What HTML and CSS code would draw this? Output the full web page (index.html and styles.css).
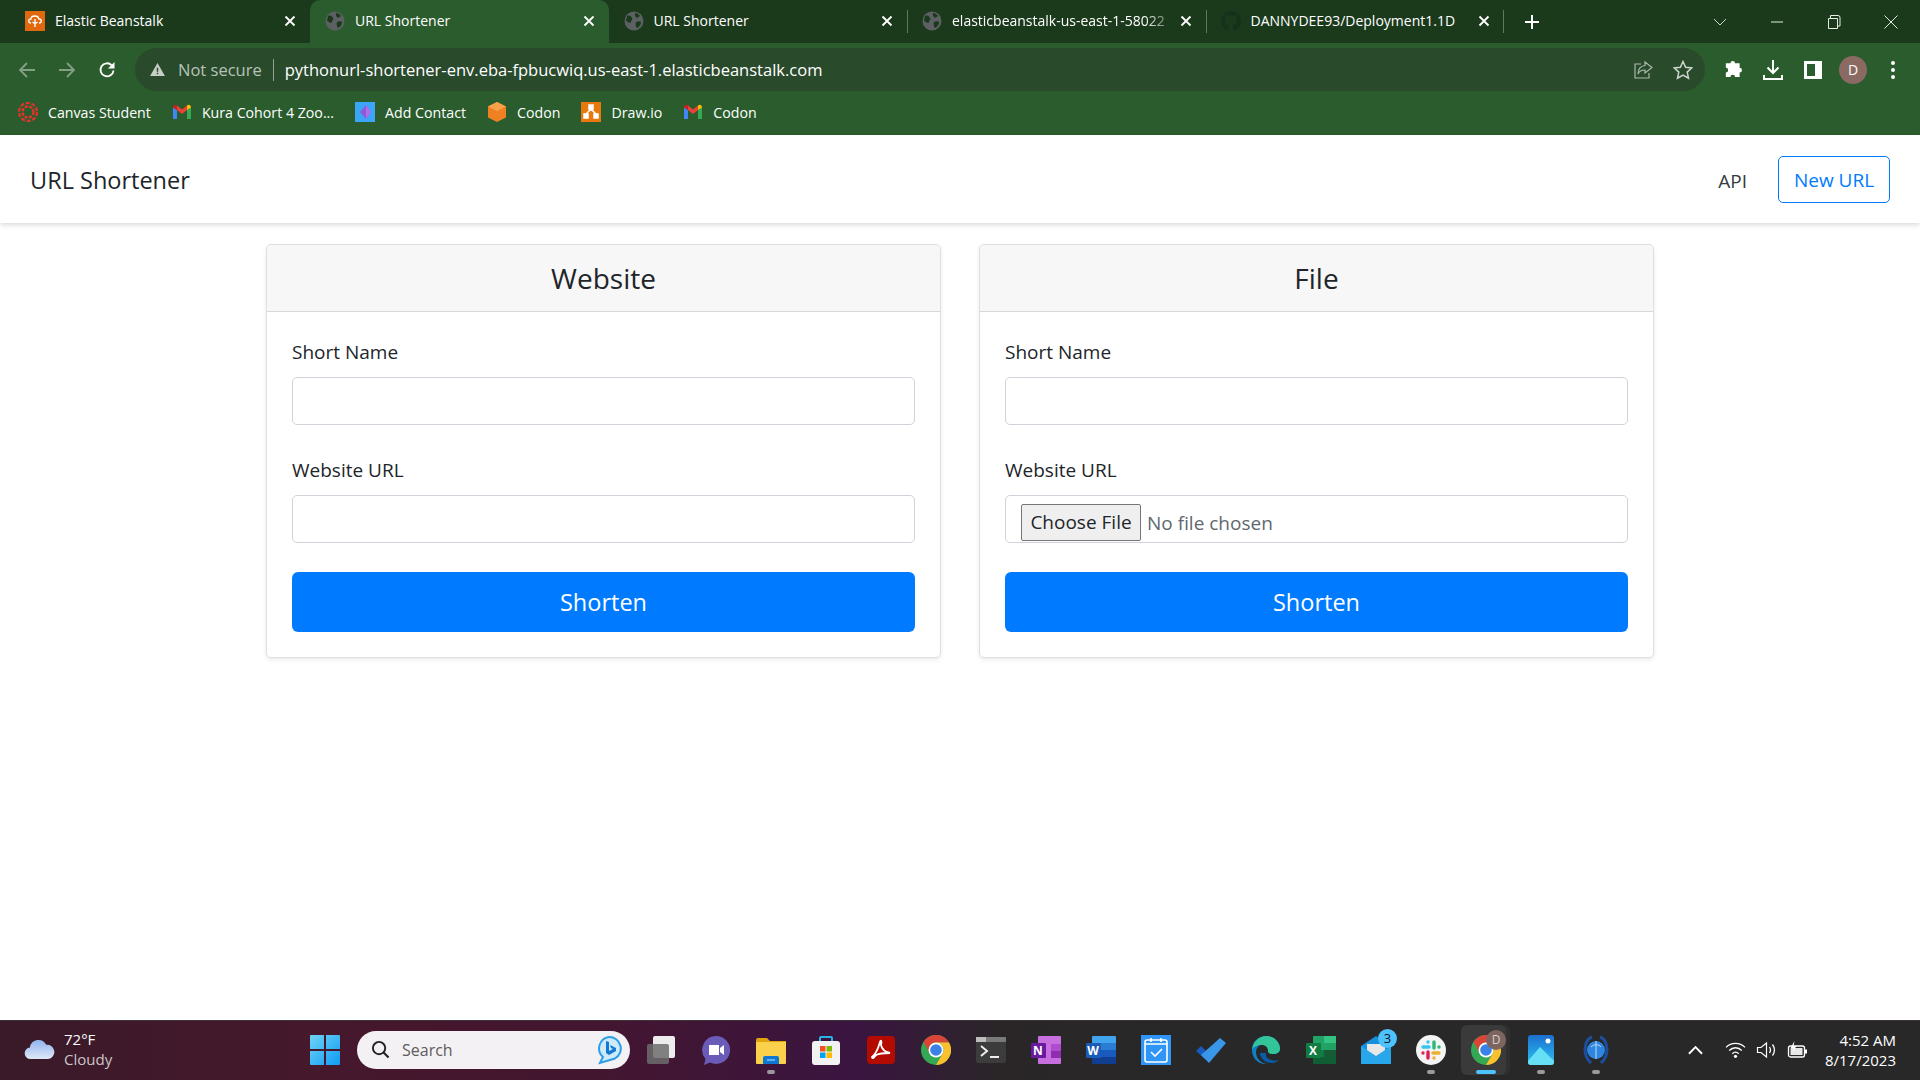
FILE: index.html
```html
<!doctype html>
<html lang="en">
<head>
	<meta charset="UTF-8">
	<title>URL Shortener</title>
	<link rel="stylesheet" href="styles.css">
</head>
<body>
	<svg class="defs" width="0" height="0">
		<symbol id="x" viewBox="0 0 12 12"><path d="M1.5 1.5l9 9M10.5 1.5l-9 9" stroke="#fff" stroke-width="1.8" fill="none"/></symbol>
		<symbol id="globe" viewBox="0 0 20 20"><circle cx="10" cy="10" r="9.5" fill="#5c6063"/><path d="M3 5c3-1 4 0 5 2s-1 2-1 4-3 0-5-1zM11 2c3 0 4 2 5 3l-3 2-2-2zM12 11c2-1 4-1 5 0 0 3-2 5-4 6-1-1-2-4-1-6z" fill="#1b3a1c"/></symbol>
		<symbol id="gmail" viewBox="0 0 20 16"><path d="M1 15V3l4 3v9z" fill="#4285f4"/><path d="M19 15V3l-4 3v9z" fill="#34a853"/><path d="M5 6V1.500l5 4 5-4V6l-5 4z" fill="#ea4335"/><path d="M1 3.500C1 1 3.500 0 5 1.500V6z" fill="#c5221f"/><path d="M19 3.500C19 1 16.500 0 15 1.500V6z" fill="#fbbc04"/></symbol>
		<symbol id="chrome" viewBox="0 0 30 30"><circle cx="15" cy="15" r="15" fill="#34a853"/><path d="M2.500 6.700A15 15 0 0 1 28 7.500H15A7.500 7.500 0 0 0 8.500 11.250L9 18.700z" fill="#db4437"/><path d="M28 7.500A15 15 0 0 1 15 30L21.500 18.750A7.500 7.500 0 0 0 15 7.500z" fill="#fbc02d"/><circle cx="15" cy="15" r="7.500" fill="#fff"/><circle cx="15" cy="15" r="5.800" fill="#3b82e8"/></symbol>
	</svg>

	<div class="tabstrip">
		<div class="tab">
			<svg class="favicon" viewBox="0 0 20 20"><rect width="20" height="20" fill="#e0690f"/><path d="M6 12c-3 0-3-4 0-4 0-4 7-4 8 0 3 0 3 4 0 4M10 8v8M7.500 11l2.500 2 2.500-2" stroke="#fff" stroke-width="1.300" fill="none"/></svg>
			<span class="tab-title">Elastic Beanstalk</span>
			<svg class="tab-close"><use href="#x"/></svg>
		</div>
		<div class="tab active">
			<svg class="favicon"><use href="#globe"/></svg>
			<span class="tab-title">URL Shortener</span>
			<svg class="tab-close"><use href="#x"/></svg>
		</div>
		<div class="tab">
			<svg class="favicon"><use href="#globe"/></svg>
			<span class="tab-title">URL Shortener</span>
			<svg class="tab-close"><use href="#x"/></svg>
		</div>
		<div class="tab divided">
			<svg class="favicon"><use href="#globe"/></svg>
			<span class="tab-title faded">elasticbeanstalk-us-east-1-58022</span>
			<svg class="tab-close"><use href="#x"/></svg>
		</div>
		<div class="tab divided closing">
			<svg class="favicon" viewBox="0 0 20 20"><path d="M10 0a10 10 0 0 0-3 19.500c.500 0 .700-.200.700-.500v-2c-2.800.600-3.400-1.200-3.400-1.200-.500-1.200-1.100-1.500-1.100-1.500-.900-.600.100-.600.100-.600 1 .100 1.500 1 1.500 1 .900 1.500 2.300 1.100 2.900.800 0-.600.300-1.100.600-1.300-2.200-.300-4.600-1.100-4.600-5 0-1.100.400-2 1-2.700 0-.300-.400-1.300.100-2.700 0 0 .800-.300 2.700 1a9 9 0 0 1 5 0c1.900-1.300 2.700-1 2.700-1 .500 1.400.200 2.400.100 2.700.600.700 1 1.600 1 2.700 0 3.900-2.400 4.700-4.600 5 .400.300.700.900.700 1.900V19c0 .300.200.600.700.500A10 10 0 0 0 10 0z" fill="#16301a"/></svg>
			<span class="tab-title">DANNYDEE93/Deployment1.1D</span>
			<svg class="tab-close"><use href="#x"/></svg>
		</div>
		<svg class="new-tab" viewBox="0 0 16 16"><path d="M8 1v14M1 8h14" stroke="#fff" stroke-width="2"/></svg>
		<div class="win-controls">
			<svg viewBox="0 0 14 14"><path d="M1 4l6 6 6-6" stroke="#cfd8cf" fill="none"/></svg>
			<svg viewBox="0 0 14 14"><path d="M1 7h12" stroke="#e6ece6"/></svg>
			<svg viewBox="0 0 14 14"><path d="M1.500 3.500h9v10h-9zM3.500 3.500v-3h7.500a2 2 0 0 1 2 2v8.500h-2.500" stroke="#e6ece6" fill="none"/></svg>
			<svg viewBox="0 0 14 14"><path d="M.5.500l13 13M13.500.500l-13 13" stroke="#e6ece6" fill="none"/></svg>
		</div>
	</div>

	<div class="toolbar">
		<div class="nav-btns">
			<svg viewBox="0 0 18 18"><path d="M17 9H2M9 2L2 9l7 7" stroke="#83a085" stroke-width="1.800" fill="none"/></svg>
			<svg viewBox="0 0 18 18"><path d="M1 9h15M9 2l7 7-7 7" stroke="#83a085" stroke-width="1.800" fill="none"/></svg>
			<svg viewBox="0 0 18 18"><path d="M15.500 9.500a6.500 6.500 0 1 1-1.800-5.200" stroke="#fff" stroke-width="1.900" fill="none"/><path d="M16.500 1v6.500H10z" fill="#fff"/></svg>
		</div>
		<div class="omnibox">
			<svg class="warn" viewBox="0 0 16 14"><path d="M8 0l8 14H0z" fill="#c6cfc6"/><path d="M7.200 5h1.600v4.500H7.200zM7.200 10.500h1.600v1.600H7.200z" fill="#2a4a2c"/></svg>
			<span class="not-secure">Not secure</span>
			<span class="omni-sep"></span>
			<span class="url">pythonurl-shortener-env.eba-fpbucwiq.us-east-1.elasticbeanstalk.com</span>
			<svg class="omni-icon first" viewBox="0 0 20 20"><path d="M8 4H2v14h14v-5" stroke="#a9b7a9" stroke-width="1.200" fill="none"/><path d="M12 2l7 5.500-7 5.500V10c-4 0-6 1.500-7 4 0-5 3-8 7-8.500z" stroke="#a9b7a9" stroke-width="1.200" fill="none"/></svg>
			<svg class="omni-icon" viewBox="0 0 20 20"><path d="M10 1.500l2.600 5.700 6.200.700-4.600 4.200 1.300 6.100L10 15.100l-5.500 3.100 1.300-6.100L1.200 7.900l6.200-.700z" stroke="#cdd6cd" stroke-width="1.500" fill="none"/></svg>
		</div>
		<div class="tool-btns">
			<svg viewBox="0 0 20 20"><path d="M7 3a2.500 2.500 0 0 1 5 0h5v5a2.500 2.500 0 0 1 0 5v5h-5a2.500 2.500 0 0 0-5 0H2v-5a2.500 2.500 0 0 0 0-5V3z" fill="#fff" transform="translate(1 .5) scale(.92)"/></svg>
			<svg viewBox="0 0 20 20"><path d="M10 0v12M4.500 7.500L10 13l5.500-5.500M1 15v4h18v-4" stroke="#fff" stroke-width="2" fill="none"/></svg>
			<svg viewBox="0 0 20 20"><path d="M1 1h18v18H1z" fill="#fff"/><path d="M4 4h8v12H4z" fill="#2a5c2d"/></svg>
			<span class="avatar">D</span>
			<svg viewBox="0 0 20 20"><circle cx="10" cy="3" r="2" fill="#fff"/><circle cx="10" cy="10" r="2" fill="#fff"/><circle cx="10" cy="17" r="2" fill="#fff"/></svg>
		</div>
	</div>

	<div class="bookmarks">
		<div class="bm">
			<svg viewBox="0 0 20 20"><circle cx="10" cy="10" r="5.500" fill="none" stroke="#e2342d" stroke-width="2.500" stroke-dasharray="3 1.400"/><circle cx="10" cy="10" r="9" fill="none" stroke="#e2342d" stroke-width="2.200" stroke-dasharray="4 1.700"/></svg>
			<span>Canvas Student</span>
		</div>
		<div class="bm">
			<svg><use href="#gmail"/></svg>
			<span>Kura Cohort 4 Zoo...</span>
		</div>
		<div class="bm">
			<svg viewBox="0 0 20 20"><rect width="20" height="20" fill="#3aa6f5"/><path d="M11 3l5 7-5 7-6-7z" fill="#8e5bd8"/><path d="M11 3l5 7-5 7z" fill="#b06fe8"/></svg>
			<span>Add Contact</span>
		</div>
		<div class="bm">
			<svg viewBox="0 0 20 20"><path d="M10 0l9 4.500v11L10 20l-9-4.500v-11z" fill="#ef8024"/><path d="M10 0l9 4.500L10 9 1 4.500z" fill="#f7a24b"/></svg>
			<span>Codon</span>
		</div>
		<div class="bm">
			<svg viewBox="0 0 20 20"><rect width="20" height="20" fill="#e8790f"/><path d="M8 3h4v4H8zM3 12h4v4H3zM13 12h4v4h-4zM10 7l-5 5M10 7l5 5" fill="#fff" stroke="#fff" stroke-width="1.500"/></svg>
			<span>Draw.io</span>
		</div>
		<div class="bm">
			<svg><use href="#gmail"/></svg>
			<span>Codon</span>
		</div>
	</div>

	<nav class="navbar">
		<a class="brand">URL Shortener</a>
		<a class="nav-link">API</a>
		<a class="btn-outline">New URL</a>
	</nav>

	<main class="cards">
		<section class="card">
			<h4 class="card-header">Website</h4>
			<form class="card-body">
				<label class="field-label">Short Name</label>
				<input class="form-control" type="text">
				<label class="field-label">Website URL</label>
				<input class="form-control last" type="text">
				<button class="btn-primary" type="button">Shorten</button>
			</form>
		</section>
		<section class="card">
			<h4 class="card-header">File</h4>
			<form class="card-body">
				<label class="field-label">Short Name</label>
				<input class="form-control" type="text">
				<label class="field-label">Website URL</label>
				<input class="form-control last" type="file">
				<button class="btn-primary" type="button">Shorten</button>
			</form>
		</section>
	</main>

	<footer class="taskbar">
		<div class="weather">
			<svg viewBox="0 0 32 22"><defs><linearGradient id="cloud" x1="0" y1="0" x2="0" y2="1"><stop offset="0" stop-color="#8fb4ee"/><stop offset="1" stop-color="#dfe8f8"/></linearGradient></defs><path d="M7 21a6 6 0 0 1-1-12 9 9 0 0 1 17-3 7.500 7.500 0 0 1 2 15z" fill="url(#cloud)"/></svg>
			<div class="weather-text"><span>72°F</span><span class="muted">Cloudy</span></div>
		</div>
		<div class="task-item">
			<svg viewBox="0 0 30 30"><defs><linearGradient id="win" x1="0" y1="0" x2="1" y2="1"><stop offset="0" stop-color="#6fd4f5"/><stop offset="1" stop-color="#0f9bf5"/></linearGradient></defs><path d="M0 1a1 1 0 0 1 1-1h13v14H0zM16 0h13a1 1 0 0 1 1 1v13H16zM0 16h14v14H1a1 1 0 0 1-1-1zM16 16h14v13a1 1 0 0 1-1 1H16z" fill="url(#win)"/></svg>
		</div>
		<div class="search">
			<svg class="search-glass" viewBox="0 0 20 20"><circle cx="8.500" cy="8.500" r="6.500" fill="none" stroke="#222" stroke-width="2"/><path d="M13 13l5.500 5.500" stroke="#222" stroke-width="2.200"/></svg>
			<span class="search-text">Search</span>
			<svg class="bing" viewBox="0 0 26 30"><path d="M13 2a11.500 11.500 0 0 1 6 21.500L4 28l3-6A11.500 11.500 0 0 1 13 2z" fill="#cdeafb" stroke="#2a9ee8" stroke-width="2"/><path d="M10 6l3 1v9l4-2-2-1-1-3 6 3v3l-7 4-3-2z" fill="#1477d4"/></svg>
		</div>
		<div class="task-icons">
			<div class="task-item"><svg viewBox="0 0 30 30"><rect x="7" y="1" width="22" height="22" rx="2" fill="#ececec"/><rect x="1" y="9" width="22" height="20" rx="2" fill="#6d6d6d" opacity=".85"/></svg></div>
			<div class="task-item"><svg viewBox="0 0 30 30"><path d="M15 1a14 14 0 1 1-6 26.600L3 30l1.500-6A14 14 0 0 1 15 1z" fill="#6a5bb8"/><path d="M8 10h10v10H8zM19 13l4-3v10l-4-3z" fill="#fff"/></svg></div>
			<div class="task-item dot"><svg viewBox="0 0 30 30"><path d="M0 5a2 2 0 0 1 2-2h9l3 3h16v5H0z" fill="#e2a40e"/><path d="M0 7h30v21a1 1 0 0 1-1 1H1a1 1 0 0 1-1-1z" fill="#fbd14b"/><path d="M7 29v-6a2 2 0 0 1 2-2h12a2 2 0 0 1 2 2v6z" fill="#0f78d4"/><path d="M11 25h8" stroke="#7ec4f5" stroke-width="1.500"/></svg></div>
			<div class="task-item"><svg viewBox="0 0 30 30"><path d="M9 7V3a1 1 0 0 1 1-1h10a1 1 0 0 1 1 1v4" stroke="#27b5e8" stroke-width="2" fill="none"/><rect x="1" y="6" width="28" height="24" rx="3" fill="#f2f2f2"/><path d="M9 11h5.500v5.500H9z" fill="#f25022"/><path d="M15.500 11H21v5.500h-5.500z" fill="#7fba00"/><path d="M9 17.500h5.500V23H9z" fill="#00a4ef"/><path d="M15.500 17.500H21V23h-5.500z" fill="#ffb900"/></svg></div>
			<div class="task-item"><svg viewBox="0 0 30 30"><rect x="1" y="1" width="28" height="28" rx="4" fill="#b30b00"/><path d="M6 22c3-2 6-8 8-15 1-3 2 0 1 3 1 5 4 7 9 8-5 0-10 0-14 2-2 3-4 4-4 2z" fill="none" stroke="#fff" stroke-width="1.800"/></svg></div>
			<div class="task-item"><svg viewBox="0 0 30 30"><use href="#chrome"/></svg></div>
			<div class="task-item"><svg viewBox="0 0 30 30"><rect y="2" width="30" height="26" rx="2" fill="#3c3c3c"/><rect y="2" width="10" height="5" fill="#bdbdbd"/><rect x="10" y="2" width="20" height="5" fill="#7a7a7a"/><path d="M5 11l6 5-6 5" stroke="#eee" stroke-width="2" fill="none"/><path d="M14 22h9" stroke="#eee" stroke-width="2"/></svg></div>
			<div class="task-item"><svg viewBox="0 0 30 30"><rect x="7" y="1" width="23" height="28" rx="1" fill="#c86fe0"/><path d="M20 9h10v7H20z" fill="#ae4bcf"/><path d="M20 16h10v7H20z" fill="#8e2db0"/><rect y="8" width="15" height="15" rx="1" fill="#6a1a9e"/></svg><span class="letter">N</span></div>
			<div class="task-item"><svg viewBox="0 0 30 30"><rect x="6" y="1" width="24" height="28" rx="1" fill="#41a5ee"/><path d="M6 8h24v7H6z" fill="#2b7cd3"/><path d="M6 15h24v7H6z" fill="#185abd"/><path d="M6 22h24v7H6z" fill="#103f91"/><rect y="8" width="15" height="15" rx="1" fill="#1a5cb8"/></svg><span class="letter">W</span></div>
			<div class="task-item"><svg viewBox="0 0 30 30"><rect width="30" height="30" fill="#2f95f7"/><rect x="4" y="5" width="22" height="22" rx="2" fill="none" stroke="#fff" stroke-width="1.600"/><path d="M4 9h22M10 3v4M20 3v4" stroke="#fff" stroke-width="1.600"/><path d="M10 17l4 4 7-7" stroke="#fff" stroke-width="1.600" fill="none"/></svg></div>
			<div class="task-item"><svg viewBox="0 0 30 30"><path d="M0 16l5-5 8 8-4 5z" fill="#185abd"/><path d="M9 24l-4-4L24 3l6 5-17 20z" fill="#3a96e8"/></svg></div>
			<div class="task-item"><svg viewBox="0 0 30 30"><path d="M1 15C1 6 8 1 15 1c8 0 14 6 14 13 0 3-3 5-7 5-3 0-5-1-5-3 3-1 4-7-3-7-6 0-9 4-9 8 0 6 5 12 12 12-12 1-16-8-16-14z" fill="#0f7fc9"/><path d="M1 15C2 6 9 1 15 1c8 0 14 6 14 13 0 3-3 5-7 5-3 0-5-1-5-3 0-4-3-6-6-6-5 0-9 2-10 5z" fill="#33c59a"/><path d="M9 18c0 5 5 10 12 10 3 0 5-1 7-3-3 1-7 1-10-1-3-1-3-4-3-6-2 0-4 0-6 0z" fill="#0b5ca8"/></svg></div>
			<div class="task-item"><svg viewBox="0 0 30 30"><rect x="7" y="1" width="23" height="28" rx="1" fill="#21a366"/><path d="M18 1h12v7H18z" fill="#33c481"/><path d="M7 15h11v7H7z" fill="#107c41"/><path d="M18 15h12v7H18z" fill="#185c37"/><path d="M7 22h23v7H7z" fill="#0f5e34"/><rect y="8" width="15" height="15" rx="1" fill="#107c41"/></svg><span class="letter">X</span></div>
			<div class="task-item"><svg viewBox="0 0 30 30"><path d="M0 11L15 1l15 10v18H0z" fill="#1490df"/><path d="M6 9h18v9l-9 5-9-5z" fill="#e8e8e8"/><path d="M0 11l15 10 15-10v18H0z" fill="#28a8ea"/></svg><span class="badge">3</span></div>
			<div class="task-item dot"><svg viewBox="0 0 30 30"><circle cx="15" cy="15" r="15" fill="#f4f4f4"/><path d="M7 12h6M12 7h.01" stroke="#36c5f0" stroke-width="3.400" stroke-linecap="round" fill="none"/><path d="M18 7v6M23 12h.01" stroke="#2eb67d" stroke-width="3.400" stroke-linecap="round"/><path d="M17 18h6M18 23h.01" stroke="#ecb22e" stroke-width="3.400" stroke-linecap="round"/><path d="M12 17v6M7 18h.01" stroke="#e01e5a" stroke-width="3.400" stroke-linecap="round"/></svg></div>
			<div class="task-item running"><svg viewBox="0 0 30 30"><use href="#chrome"/></svg><span class="badge profile">D</span></div>
			<div class="task-item dot"><svg viewBox="0 0 26 30"><defs><linearGradient id="pic" x1="0" y1="0" x2="0" y2="1"><stop offset="0" stop-color="#1c6fd0"/><stop offset="1" stop-color="#2cc3f0"/></linearGradient></defs><rect width="26" height="30" rx="3" fill="url(#pic)"/><path d="M0 26l12-14 14 14v1a3 3 0 0 1-3 3H3a3 3 0 0 1-3-3z" fill="#67e0f5"/><circle cx="20" cy="6" r="2.500" fill="#fff"/></svg></div>
			<div class="task-item dot"><svg viewBox="0 0 30 30"><path d="M11 2C3 5 1 20 10 28" stroke="#1d4f9e" stroke-width="3" fill="none"/><path d="M19 2c8 3 10 18 1 26" stroke="#1d4f9e" stroke-width="3" fill="none"/><circle cx="15" cy="15" r="9" fill="#2f86e0"/><path d="M10 12c3-3 8-3 10 0M15 6v18" stroke="#b8dcfa" fill="none"/></svg></div>
		</div>
		<div class="tray">
			<svg class="tray-chevron" viewBox="0 0 16 10"><path d="M1 9l7-7 7 7" stroke="#fff" stroke-width="2" fill="none"/></svg>
			<svg class="tray-icon" viewBox="0 0 20 16"><path d="M1 5.500c5-5 13-5 18 0M4 8.500c3.500-3.500 8.500-3.500 12 0M7 11.500c2-2 4-2 6 0" stroke="#fff" stroke-width="1.300" fill="none"/><circle cx="10" cy="14" r="1.500" fill="#fff"/></svg>
			<svg class="tray-icon" viewBox="0 0 20 18"><path d="M1 6.500h3.500L10 2v14l-5.500-4.500H1z" stroke="#fff" stroke-width="1.200" fill="none"/><path d="M13 6c1.300 2 1.300 4 0 6M16 3.500c2.500 3.500 2.500 7.500 0 11" stroke="#fff" stroke-width="1.300" fill="none"/></svg>
			<svg class="tray-icon" viewBox="0 0 20 18"><rect x="1" y="5" width="16" height="11" rx="2" fill="none" stroke="#fff" stroke-width="1.300"/><rect x="3" y="7" width="12" height="7" fill="#e8e8e8"/><path d="M17.500 8.500h2v4h-2z" fill="#fff"/><path d="M7 0L3 7h3l-1 4 4-6H6z" fill="#fff"/></svg>
			<div class="clock"><span>4:52 AM</span><span>8/17/2023</span></div>
		</div>
	</footer>
</body>
</html>
```

FILE: styles.css
```css
*{
	margin: 0;
	padding: 0;
	box-sizing: border-box;
}
html,body{
	height: 100%;
	overflow: hidden;
}
body{
	display: flex;
	flex-direction: column;
	font-family: "Open Sans", "Liberation Sans", sans-serif;
	color: #212529;
	background: #fff;
}
.defs{
	display: block;
	height: 0;
}

/* browser chrome */
.tabstrip{
	display: flex;
	align-items: stretch;
	height: 43px;
	background: #1b3a1c;
	color: #fff;
	font-size: 14px;
}
.tab{
	position: relative;
	display: flex;
	align-items: center;
	width: 298.5px;
	padding: 0 14px 2px 15px;
}
.tab:first-child{
	width: 310px;
	padding-left: 25px;
	padding-right: 14px;
}
.tab.active{
	background: #2a5c2d;
	border-radius: 10px 10px 0 0;
}
.tab.divided::before{
	content: "";
	position: absolute;
	left: 0;
	top: 10px;
	bottom: 10px;
	width: 1px;
	background: #5c7a5d;
}
.tab.closing::after{
	content: "";
	position: absolute;
	right: 0;
	top: 10px;
	bottom: 10px;
	width: 1px;
	background: #5c7a5d;
}
.favicon{
	width: 20px;
	height: 20px;
	flex: none;
}
.tab-title{
	flex: 1;
	margin-left: 10px;
	white-space: nowrap;
	overflow: hidden;
}
.tab-title.faded{
	-webkit-mask-image: linear-gradient(to right, #000 88%, rgba(0,0,0,0.25));
	mask-image: linear-gradient(to right, #000 88%, rgba(0,0,0,0.25));
}
.tab-close{
	width: 12px;
	height: 12px;
	flex: none;
	margin-left: 10px;
}
.new-tab{
	width: 16px;
	height: 16px;
	align-self: center;
	margin-left: 20px;
}
.win-controls{
	display: flex;
	align-items: center;
	gap: 43px;
	margin-left: auto;
	padding-right: 22px;
}
.win-controls svg{
	width: 14px;
	height: 14px;
}

.toolbar{
	display: flex;
	align-items: center;
	height: 48px;
	padding-top: 5px;
	background: #2a5c2d;
}
.nav-btns{
	display: flex;
	align-items: center;
	gap: 22px;
	width: 135px;
	padding-left: 18px;
}
.nav-btns svg{
	width: 18px;
	height: 18px;
}
.omnibox{
	display: flex;
	align-items: center;
	width: 1570px;
	height: 43px;
	padding: 0 12px 0 15px;
	background: #2a4a2c;
	border-radius: 22px;
	color: #fff;
	font-size: 16.5px;
}
.warn{
	width: 15px;
	height: 13px;
}
.not-secure{
	margin-left: 13px;
	color: #b7c4b7;
}
.omni-sep{
	width: 1px;
	height: 22px;
	margin: 0 11px;
	background: #8ea28f;
}
.omni-icon{
	width: 20px;
	height: 20px;
	margin-left: 20px;
}
.omni-icon.first{
	margin-left: auto;
}
.tool-btns{
	display: flex;
	align-items: center;
	gap: 20px;
	padding-left: 18px;
}
.tool-btns svg{
	width: 20px;
	height: 20px;
}
.avatar{
	display: flex;
	align-items: center;
	justify-content: center;
	width: 28px;
	height: 28px;
	margin: 0 -4px;
	border-radius: 50%;
	background: #8a6a63;
	color: #fff;
	font-size: 14px;
}

.bookmarks{
	display: flex;
	align-items: center;
	gap: 21px;
	height: 44px;
	padding: 0 0 2px 18px;
	background: #2a5c2d;
	color: #fff;
	font-size: 14.2px;
}
.bm{
	display: flex;
	align-items: center;
	gap: 10px;
}
.bm svg{
	width: 20px;
	height: 20px;
}

/* page */
.navbar{
	display: flex;
	align-items: center;
	height: 88px;
	padding: 1px 30px 0;
	background: #fff;
	box-shadow: 0 2px 5px rgba(0,0,0,0.15);
}
.brand{
	margin-right: auto;
	padding-top: 1px;
	font-size: 23.500px;
}
.nav-link{
	padding-top: 2px;
	font-size: 19px;
	color: #343a40;
}
.btn-outline{
	display: flex;
	align-items: center;
	justify-content: center;
	width: 112px;
	height: 47px;
	margin-left: 31px;
	padding-top: 1px;
	border: 1px solid #007bff;
	border-radius: 5px;
	color: #007bff;
	font-size: 19px;
}
.cards{
	flex: 1;
	display: grid;
	grid-template-columns: 675px 675px;
	justify-content: center;
	align-items: start;
	gap: 38px;
	padding-top: 21px;
}
.card{
	border: 1px solid rgba(0,0,0,0.125);
	border-radius: 5px;
	box-shadow: 0 2px 4px rgba(0,0,0,0.08);
}
.card-header{
	padding: 15px 0;
	background: #f7f7f7;
	border-bottom: 1px solid rgba(0,0,0,0.125);
	border-radius: 5px 5px 0 0;
	text-align: center;
	font-size: 28px;
	font-weight: 400;
	line-height: 36px;
}
.card-body{
	display: flex;
	flex-direction: column;
	padding: 25px;
}
.field-label{
	margin-bottom: 10px;
	font-size: 19px;
	line-height: 30px;
}
.form-control{
	height: 47.5px;
	margin-bottom: 30.5px;
	padding: 7.5px 15px;
	border: 1px solid #ced4da;
	border-radius: 5px;
	background: #fff;
	color: #5f6870;
	font-family: inherit;
	font-size: 19px;
}
.form-control.last{
	margin-bottom: 29.5px;
}
.form-control::file-selector-button{
	width: 120px;
	height: 37px;
	margin-right: 6px;
	border: 1px solid #767676;
	border-radius: 2px;
	background: #efefef;
	color: #212529;
	font-family: inherit;
	font-size: 19px;
}
.btn-primary{
	height: 60px;
	border: none;
	border-radius: 6px;
	background: #007bff;
	color: #fff;
	font-family: inherit;
	font-size: 23.500px;
}

/* taskbar */
.taskbar{
	display: flex;
	align-items: center;
	height: 60px;
	padding-bottom: 2px;
	background: linear-gradient(to right, #3a1a28 0, #45182c 300px, #431630 600px, #3a1540 860px, #2a2628 1000px, #282828 1200px);
	border-top: 1px solid #3b3338;
	color: #fff;
	font-size: 15px;
}
.weather{
	display: flex;
	align-items: center;
	gap: 9px;
	width: 297px;
	padding-left: 24px;
}
.weather svg{
	width: 31px;
	height: 21px;
}
.weather-text{
	display: flex;
	flex-direction: column;
	padding-bottom: 2px;
	line-height: 20px;
}
.clock{
	display: flex;
	flex-direction: column;
	line-height: 20px;
}
.muted{
	color: #cfc4ca;
}
.task-item{
	position: relative;
	display: flex;
	align-items: center;
	justify-content: center;
	flex: none;
	width: 55px;
	height: 50px;
}
.task-item svg{
	width: 30px;
	height: 30px;
}
.task-item.dot::after{
	content: "";
	position: absolute;
	left: 50%;
	bottom: 1px;
	width: 8px;
	height: 4px;
	margin-left: -4px;
	border-radius: 2px;
	background: #9a9a9a;
}
.task-item.running{
	width: 45px;
	margin: 0 7px 0 3px;
	padding-left: 4px;
	background: #3a3a3a;
	border-radius: 6px;
	box-shadow: 4px 0 0 #303030;
}
.task-item.running::after{
	content: "";
	position: absolute;
	left: 55%;
	bottom: 1px;
	width: 20px;
	height: 4px;
	margin-left: -10px;
	border-radius: 2px;
	background: #4cc2ff;
}
.letter{
	position: absolute;
	left: 12.5px;
	top: 17px;
	width: 15px;
	text-align: center;
	font-size: 12px;
	font-weight: 700;
}
.badge{
	position: absolute;
	right: 6px;
	top: 4px;
	width: 19px;
	height: 19px;
	border-radius: 50%;
	background: #4cc2ff;
	color: #111;
	text-align: center;
	font-size: 13px;
	line-height: 19px;
}
.badge.profile{
	right: 0;
	top: 5px;
	width: 20px;
	height: 20px;
	background: #7d6660;
	color: #d8cfcc;
	font-size: 12px;
}
.search{
	display: flex;
	align-items: center;
	flex: none;
	width: 273px;
	height: 38px;
	margin: 0 3px 0 5px;
	padding: 0 8px 0 14px;
	border-radius: 19px;
	background: #f3f1f3;
	color: #5f5b5f;
	font-size: 16px;
}
.search-glass{
	width: 19px;
	height: 19px;
}
.search-text{
	margin-left: 12px;
}
.bing{
	width: 26px;
	height: 30px;
	margin-left: auto;
}
.task-icons{
	display: flex;
	align-items: center;
}
.tray{
	flex: 1;
	display: flex;
	align-items: center;
	padding-right: 24px;
}
.tray-chevron{
	width: 15px;
	height: 10px;
	margin-left: 65px;
}
.tray-icon{
	width: 21px;
	height: 18px;
	margin-left: 10px;
}
.tray-chevron + .tray-icon{
	margin-left: 22px;
}
.clock{
	margin-left: auto;
	text-align: right;
}
```
